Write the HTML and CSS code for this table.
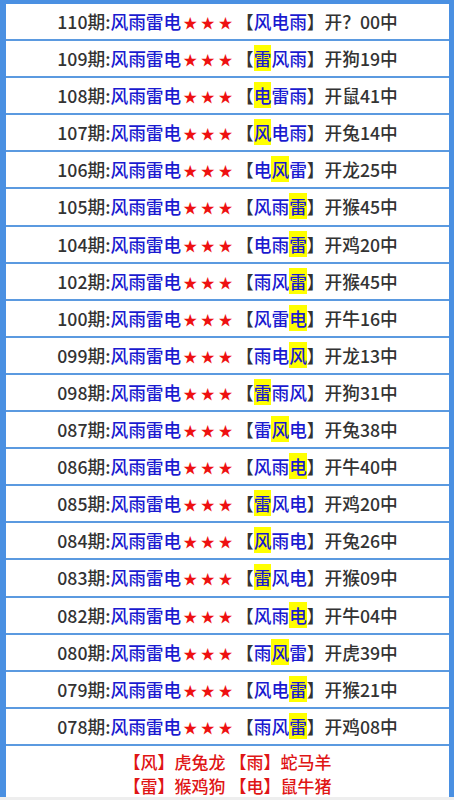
FILE: index.html
```html
<!DOCTYPE html>
<html lang="zh">
<head>
  <meta charset="UTF-8">
  <title>风雨雷电</title>
  <link rel="stylesheet" href="styles.css">
</head>
<body>
  <div class="board">
    <div class="row">110期:<span class="blue">风雨雷电</span><span class="star">★★★</span>【<span class="blue">风电雨</span>】开？00中</div>
    <div class="row">109期:<span class="blue">风雨雷电</span><span class="star">★★★</span>【<span class="blue"><em>雷</em>风雨</span>】开狗19中</div>
    <div class="row">108期:<span class="blue">风雨雷电</span><span class="star">★★★</span>【<span class="blue"><em>电</em>雷雨</span>】开鼠41中</div>
    <div class="row">107期:<span class="blue">风雨雷电</span><span class="star">★★★</span>【<span class="blue"><em>风</em>电雨</span>】开兔14中</div>
    <div class="row">106期:<span class="blue">风雨雷电</span><span class="star">★★★</span>【<span class="blue">电<em>风</em>雷</span>】开龙25中</div>
    <div class="row">105期:<span class="blue">风雨雷电</span><span class="star">★★★</span>【<span class="blue">风雨<em>雷</em></span>】开猴45中</div>
    <div class="row">104期:<span class="blue">风雨雷电</span><span class="star">★★★</span>【<span class="blue">电雨<em>雷</em></span>】开鸡20中</div>
    <div class="row">102期:<span class="blue">风雨雷电</span><span class="star">★★★</span>【<span class="blue">雨风<em>雷</em></span>】开猴45中</div>
    <div class="row">100期:<span class="blue">风雨雷电</span><span class="star">★★★</span>【<span class="blue">风雷<em>电</em></span>】开牛16中</div>
    <div class="row">099期:<span class="blue">风雨雷电</span><span class="star">★★★</span>【<span class="blue">雨电<em>风</em></span>】开龙13中</div>
    <div class="row">098期:<span class="blue">风雨雷电</span><span class="star">★★★</span>【<span class="blue"><em>雷</em>雨风</span>】开狗31中</div>
    <div class="row">087期:<span class="blue">风雨雷电</span><span class="star">★★★</span>【<span class="blue">雷<em>风</em>电</span>】开兔38中</div>
    <div class="row">086期:<span class="blue">风雨雷电</span><span class="star">★★★</span>【<span class="blue">风雨<em>电</em></span>】开牛40中</div>
    <div class="row">085期:<span class="blue">风雨雷电</span><span class="star">★★★</span>【<span class="blue"><em>雷</em>风电</span>】开鸡20中</div>
    <div class="row">084期:<span class="blue">风雨雷电</span><span class="star">★★★</span>【<span class="blue"><em>风</em>雨电</span>】开兔26中</div>
    <div class="row">083期:<span class="blue">风雨雷电</span><span class="star">★★★</span>【<span class="blue"><em>雷</em>风电</span>】开猴09中</div>
    <div class="row">082期:<span class="blue">风雨雷电</span><span class="star">★★★</span>【<span class="blue">风雨<em>电</em></span>】开牛04中</div>
    <div class="row">080期:<span class="blue">风雨雷电</span><span class="star">★★★</span>【<span class="blue">雨<em>风</em>雷</span>】开虎39中</div>
    <div class="row">079期:<span class="blue">风雨雷电</span><span class="star">★★★</span>【<span class="blue">风电<em>雷</em></span>】开猴21中</div>
    <div class="row">078期:<span class="blue">风雨雷电</span><span class="star">★★★</span>【<span class="blue">雨风<em>雷</em></span>】开鸡08中</div>

    <div class="legend">
      <div>【风】虎兔龙 【雨】蛇马羊</div>
      <div>【雷】猴鸡狗 【电】鼠牛猪</div>
    </div>
  </div>
</body>
</html>
```

FILE: styles.css
```css
body {
  margin: 0;
  background: #eeeeee;
  font-family: "Noto Sans CJK SC", "Noto Sans", sans-serif;
}

.board {
  background: #fff;
  border-top: 4px solid #4a90e2;
  border-left: 6px solid #4a90e2;
  border-right: 5px solid #4a90e2;
  height: 793px;
}

.row {
  height: 35.1px;
  line-height: 35px;
  border-bottom: 2px solid #5b9ae0;
  text-align: center;
  font-size: 17.7px;
  font-weight: 500;
  color: #333;
  white-space: nowrap;
}

.blue {
  color: #1a1ad0;
}

.star {
  color: #ee1111;
  font-size: 14px;
  letter-spacing: 3.6px;
  margin-left: 2px;
  vertical-align: 1px;
}

.row em {
  font-style: normal;
  background: #ffff00;
  padding: 0;
}

.legend {
  padding-top: 4px;
  text-align: center;
  color: #e01515;
  font-size: 17px;
  font-weight: 500;
  line-height: 24px;
}
```
